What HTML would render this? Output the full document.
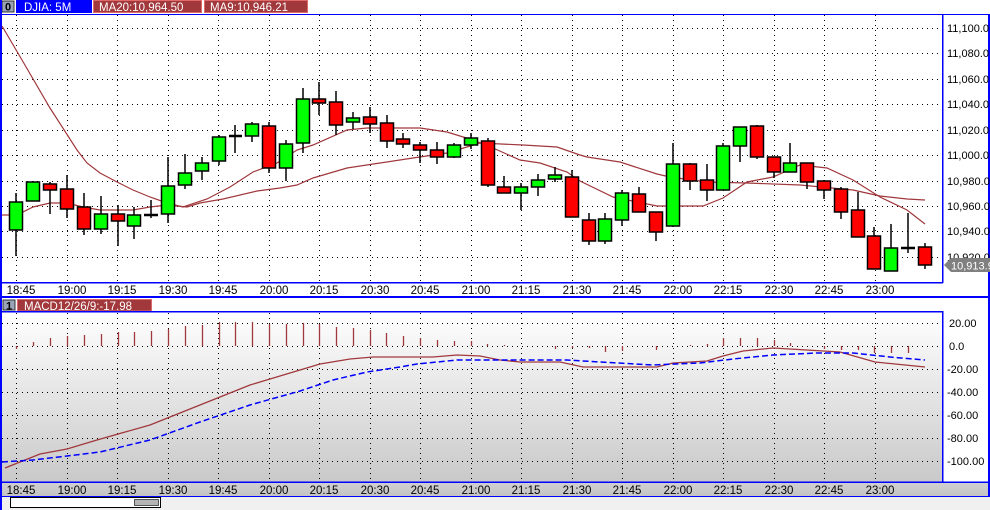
<!DOCTYPE html>
<html><head><meta charset="utf-8"><style>
html,body{margin:0;padding:0;width:990px;height:510px;overflow:hidden;background:#fff}
svg{display:block;font-family:"Liberation Sans",sans-serif}
</style></head><body>
<svg width="990" height="510" viewBox="0 0 990 510" xmlns="http://www.w3.org/2000/svg">
<defs>
<linearGradient id="mg" x1="0" y1="0" x2="0" y2="1"><stop offset="0" stop-color="#ffffff"/><stop offset="1" stop-color="#c9c9c9"/></linearGradient>
<linearGradient id="bg2" x1="0" y1="0" x2="0" y2="1"><stop offset="0" stop-color="#d0d0d0"/><stop offset="1" stop-color="#c4c4c4"/></linearGradient>
</defs>
<rect width="990" height="510" fill="#fff"/>
<rect x="2" y="1" width="12" height="11" fill="#9aa4b8" stroke="#333" stroke-width="1"/>
<text x="8" y="10.5" font-size="11" font-weight="bold" text-anchor="middle" fill="#000">0</text>
<rect x="16" y="0" width="76" height="13" fill="#0000ff"/>
<text x="24" y="11" font-size="11.5" fill="#fff">DJIA: 5M</text>
<rect x="93.5" y="0.5" width="108" height="12" fill="#a0383c" stroke="#e06a6a"/>
<text x="99" y="11" font-size="11.5" fill="#fff">MA20:10,964.50</text>
<rect x="204.5" y="0.5" width="103" height="12" fill="#a0383c" stroke="#e06a6a"/>
<text x="210" y="11" font-size="11.5" fill="#fff">MA9:10,946.21</text>

<g stroke="#000" stroke-width="1" stroke-dasharray="1,4" fill="none">
<path d="M2 28.5H943M2 53.5H943M2 79.5H943M2 104.5H943M2 130.5H943M2 155.5H943M2 181.5H943M2 206.5H943M2 231.5H943M2 257.5H943"/>
<path d="M16.5 15V282M67.5 15V282M117.5 15V282M168.5 15V282M218.5 15V282M269.5 15V282M319.5 15V282M370.5 15V282M420.5 15V282M471.5 15V282M521.5 15V282M572.5 15V282M622.5 15V282M673.5 15V282M723.5 15V282M774.5 15V282M824.5 15V282M875.5 15V282"/>
</g>

<g fill="none" stroke="#a0383c" stroke-width="1.2">
<polyline points="2,26 22,60 50,108 77,150 87,163 100,173 117,182 133,190 150,197 167,203 183,207 207,199 230,187 253,172 277,163 297,150 313,145 347,130 367,128 420,128 447,132 473,140 493,148 520,160 540,163 567,172 580,181 613,197 657,206 703,206 723,198 747,182 773,177 800,165 827,168 853,180 880,197 907,210 925,224"/>
<polyline points="2,215 17,215 33,207 50,203 67,203 83,207 100,210 133,210 150,207 167,205 187,207 200,203 223,199 257,191 280,188 297,185 313,178 347,168 380,163 413,158 447,153 480,143 523,145 557,147 580,155 587,157 620,162 657,174 670,177 707,182 747,183 800,185 853,190 880,196 907,199 925,200"/>
</g>

<g stroke="#000" stroke-width="1.5">
<path d="M16 193V256M33 181V201M50 182V214M67 175V218M84 193V235M101 196V234M118 205V246M134 207V239M151 200V218M168 157V223M185 154V189M202 157V180M219 135V165M235 125V153M252 122V142M269 122V173M286 140V181M303 88V153M319 82V115M336 91V135M353 112V129M370 107V133M387 115V148M403 133V148M420 142V163M437 142V164M454 143V158M471 133V149M488 138V187M504 176V193M521 183V210M538 174V196M555 167V182M572 170V217M589 213V245M605 213V244M622 190V226M639 187V212M656 212V241M673 143V227M690 163V190M707 164V201M723 143V190M740 127V162M757 125V159M774 157V178M790 143V172M807 163V189M824 180V199M841 187V219M858 192V237M874 227V269M891 224V271M908 213V253M925 243V269"/>
<path d="M144 215H158M229 136H242M901 248H915" stroke-width="2.5"/>
</g>
<g stroke="#000" stroke-width="1.5">
<g fill="#00ff00">
<rect x="9.5" y="202" width="13" height="28"/><rect x="26.5" y="182" width="13" height="19"/><rect x="94.5" y="214" width="13" height="15"/><rect x="127.5" y="215" width="13" height="11"/><rect x="161.5" y="186" width="13" height="28"/><rect x="178.5" y="173" width="13" height="12"/><rect x="195.5" y="163" width="13" height="8"/><rect x="212.5" y="137" width="13" height="24"/><rect x="245.5" y="124" width="13" height="12"/><rect x="279.5" y="144" width="13" height="24"/><rect x="296.5" y="99" width="13" height="44"/><rect x="346.5" y="118" width="13" height="4"/><rect x="447.5" y="145" width="13" height="12"/><rect x="464.5" y="138" width="13" height="7"/><rect x="514.5" y="187" width="13" height="6"/><rect x="531.5" y="180" width="13" height="7"/><rect x="548.5" y="175" width="13" height="4"/><rect x="598.5" y="219" width="13" height="22"/><rect x="615.5" y="193" width="13" height="27"/><rect x="666.5" y="164" width="13" height="62"/><rect x="716.5" y="146" width="13" height="44"/><rect x="733.5" y="127" width="13" height="19"/><rect x="783.5" y="163" width="13" height="9"/><rect x="884.5" y="248" width="13" height="23"/>
</g>
<g fill="#ff0000">
<rect x="43.5" y="184" width="13" height="6"/><rect x="60.5" y="189" width="13" height="20"/><rect x="77.5" y="207" width="13" height="22"/><rect x="111.5" y="214" width="13" height="7"/><rect x="262.5" y="126" width="13" height="42"/><rect x="312.5" y="99" width="13" height="4"/><rect x="329.5" y="102" width="13" height="23"/><rect x="363.5" y="117" width="13" height="7"/><rect x="380.5" y="123" width="13" height="18"/><rect x="396.5" y="139" width="13" height="5"/><rect x="413.5" y="145" width="13" height="5"/><rect x="430.5" y="150" width="13" height="7"/><rect x="481.5" y="141" width="13" height="44"/><rect x="497.5" y="187" width="13" height="6"/><rect x="565.5" y="177" width="13" height="40"/><rect x="582.5" y="220" width="13" height="21"/><rect x="632.5" y="194" width="13" height="18"/><rect x="649.5" y="212" width="13" height="20"/><rect x="683.5" y="164" width="13" height="17"/><rect x="700.5" y="180" width="13" height="10"/><rect x="750.5" y="126" width="13" height="31"/><rect x="767.5" y="157" width="13" height="15"/><rect x="800.5" y="163" width="13" height="19"/><rect x="817.5" y="181" width="13" height="9"/><rect x="834.5" y="189" width="13" height="23"/><rect x="851.5" y="210" width="13" height="27"/><rect x="867.5" y="236" width="13" height="33"/><rect x="918.5" y="247" width="13" height="18"/>
</g>
</g>

<rect x="0" y="0" width="2" height="510" fill="#0000ff"/>
<rect x="0" y="14" width="990" height="1" fill="#0000ff"/>
<rect x="942" y="14" width="1.5" height="269" fill="#0000ff"/>
<rect x="0" y="282" width="943" height="1.5" fill="#0000ff"/>
<rect x="988" y="14" width="2" height="283" fill="#0000ff"/>

<g font-size="11" fill="#000">
<text x="947" y="32">11,100.0</text><text x="947" y="57">11,080.0</text><text x="947" y="83">11,060.0</text><text x="947" y="108">11,040.0</text><text x="947" y="134">11,020.0</text><text x="947" y="159">11,000.0</text><text x="947" y="185">10,980.0</text><text x="947" y="210">10,960.0</text><text x="947" y="235">10,940.0</text><text x="947" y="261">10,920.0</text>
</g>
<path d="M944 265L951 258H990V272H951Z" fill="#808080"/>
<text x="951" y="269.5" font-size="11" fill="#fff">10,913.9</text>

<g font-size="11.5" fill="#000" text-anchor="middle">
<text x="21" y="294">18:45</text><text x="72" y="294">19:00</text><text x="122" y="294">19:15</text><text x="173" y="294">19:30</text><text x="223" y="294">19:45</text><text x="274" y="294">20:00</text><text x="324" y="294">20:15</text><text x="375" y="294">20:30</text><text x="425" y="294">20:45</text><text x="476" y="294">21:00</text><text x="526" y="294">21:15</text><text x="577" y="294">21:30</text><text x="627" y="294">21:45</text><text x="678" y="294">22:00</text><text x="728" y="294">22:15</text><text x="779" y="294">22:30</text><text x="829" y="294">22:45</text><text x="880" y="294">23:00</text>
</g>
<rect x="0" y="296" width="990" height="2" fill="#0000ff"/>

<rect x="3" y="300" width="12" height="10" fill="#9aa4b8" stroke="#333"/>
<text x="9" y="309.5" font-size="11" font-weight="bold" text-anchor="middle">1</text>
<rect x="17.5" y="299.5" width="134" height="11.5" fill="#a0383c" stroke="#e06a6a"/>
<text x="24" y="310" font-size="11.5" fill="#fff">MACD12/26/9:-17.98</text>

<rect x="2" y="312" width="941" height="170" fill="url(#mg)"/>
<rect x="943" y="312" width="47" height="170" fill="#fff"/>
<g stroke="#000" stroke-width="1" stroke-dasharray="1,4" fill="none">
<path d="M2 323.5H943M2 346.5H943M2 369.5H943M2 392.5H943M2 415.5H943M2 438.5H943M2 461.5H943"/>
<path d="M16.5 313V482M67.5 313V482M117.5 313V482M168.5 313V482M218.5 313V482M269.5 313V482M319.5 313V482M370.5 313V482M420.5 313V482M471.5 313V482M521.5 313V482M572.5 313V482M622.5 313V482M673.5 313V482M723.5 313V482M774.5 313V482M824.5 313V482M875.5 313V482"/>
</g>
<g stroke="#a0383c" stroke-width="1.3">
<path d="M16.5 346V349M33.5 346V342M50.5 346V338M67.5 346V336M84.5 346V335M101.5 346V334M118.5 346V332M134.5 346V332M151.5 346V331M168.5 346V329M185.5 346V326M202.5 346V325M219.5 346V322M235.5 346V322M252.5 346V322M269.5 346V324M286.5 346V324M303.5 346V323M319.5 346V324M336.5 346V327M353.5 346V328M370.5 346V330M386.5 346V333M403.5 346V336M420.5 346V338M437.5 346V340M454.5 346V341M471.5 346V341M487.5 346V344M504.5 346V345M555.5 346V349M572.5 346V348M589.5 346V348M605.5 346V352M622.5 346V351M656.5 346V350M690.5 346V345M707.5 346V344M723.5 346V338M740.5 346V338M757.5 346V338M774.5 346V340M790.5 346V343M824.5 346V349M841.5 346V350M858.5 346V350M874.5 346V353M891.5 346V353M908.5 346V353"/>
</g>
<polyline fill="none" stroke="#a0383c" stroke-width="1.3" points="5,468 20,462 40,454 67,449 97,440 150,425 200,405 250,385 300,370 320,364 350,359 373,357 433,357 457,355 480,356 500,360 520,362 560,362 583,367 600,367 657,367 673,363 707,361 723,356 743,351 773,348 840,352 875,362 925,367"/>
<polyline fill="none" stroke="#0000ff" stroke-width="1.5" stroke-dasharray="6,3" points="2,462 33,460 67,456 100,452 150,440 200,422 250,405 300,391 333,380 367,372 400,367 417,364 457,360 500,360 567,360 600,362 653,365 700,363 733,359 773,355 817,353 853,353 890,357 925,360"/>
<rect x="0" y="311" width="943" height="1.5" fill="#0000ff"/>
<rect x="942" y="311" width="1.5" height="171" fill="#0000ff"/>
<rect x="988" y="297" width="2" height="213" fill="#0000ff"/>
<g font-size="11" fill="#000">
<text x="949" y="327">20.00</text><text x="949" y="350">0.0</text><text x="947" y="373">-20.00</text><text x="947" y="396">-40.00</text><text x="947" y="419">-60.00</text><text x="947" y="442">-80.00</text><text x="947" y="465">-100.00</text>
</g>

<rect x="2" y="483" width="986" height="13" fill="url(#bg2)"/>
<rect x="0" y="481.5" width="990" height="1.5" fill="#0000ff"/>
<g font-size="11.5" fill="#000" text-anchor="middle">
<text x="21" y="494">18:45</text><text x="72" y="494">19:00</text><text x="122" y="494">19:15</text><text x="173" y="494">19:30</text><text x="223" y="494">19:45</text><text x="274" y="494">20:00</text><text x="324" y="494">20:15</text><text x="375" y="494">20:30</text><text x="425" y="494">20:45</text><text x="476" y="494">21:00</text><text x="526" y="494">21:15</text><text x="577" y="494">21:30</text><text x="627" y="494">21:45</text><text x="678" y="494">22:00</text><text x="728" y="494">22:15</text><text x="779" y="494">22:30</text><text x="829" y="494">22:45</text><text x="880" y="494">23:00</text>
</g>
<rect x="2" y="496" width="988" height="14" fill="#f0f0f0"/>
<rect x="0" y="496" width="990" height="1" fill="#0000ff"/>
<rect x="10.5" y="497.5" width="150" height="10" fill="#fff" stroke="#000"/>
<rect x="134.5" y="499.5" width="24" height="6" fill="#b4b4b4" stroke="#333" stroke-width="0.8"/>
<rect x="0" y="496" width="2" height="14" fill="#0000ff"/>
</svg>
</body></html>
